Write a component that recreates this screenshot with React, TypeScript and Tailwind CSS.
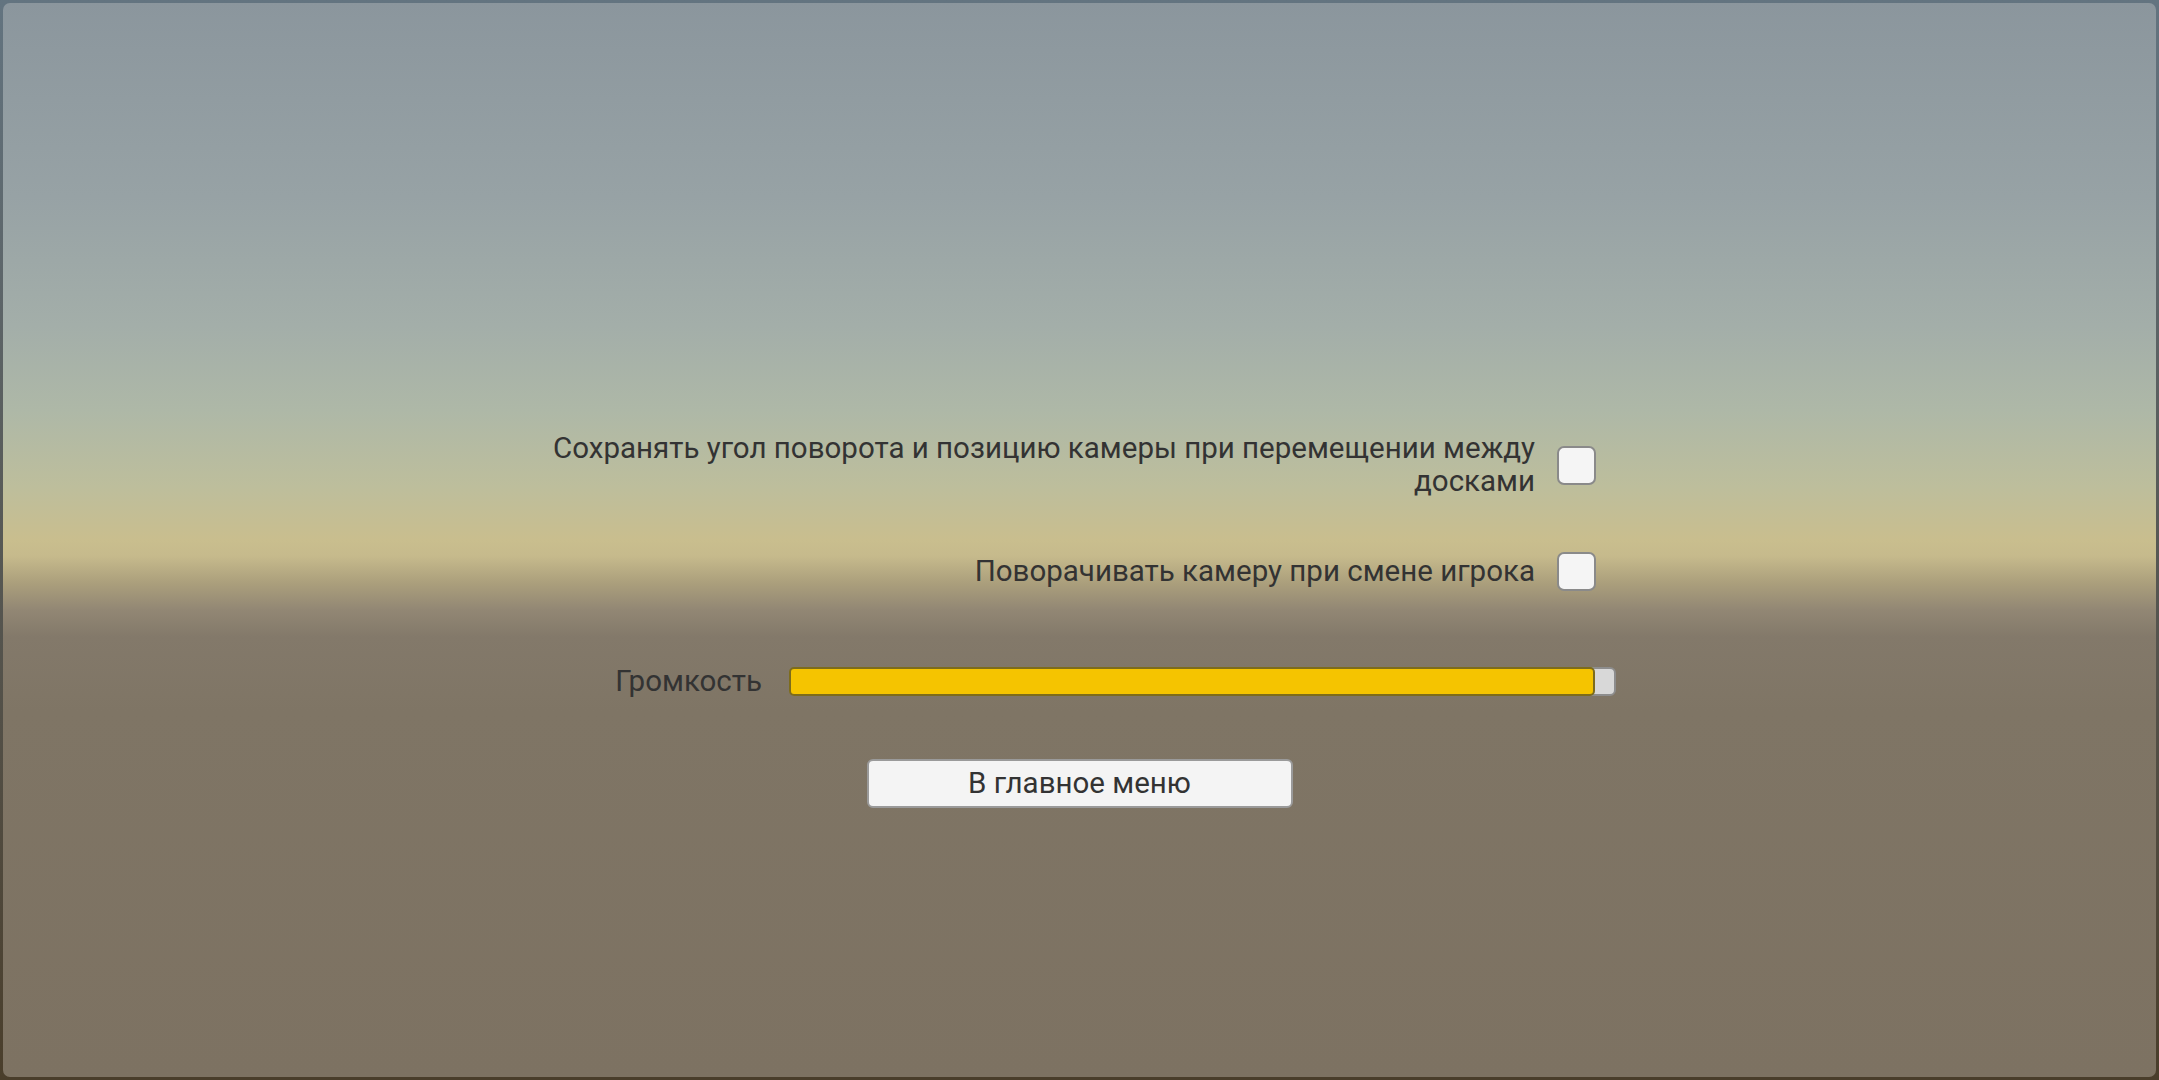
import { useState } from 'react'

const FONT = 'font-["Roboto","Liberation_Sans",sans-serif]'

const Checkbox = ({ checked, onToggle }: { checked: boolean; onToggle: () => void }) => (
  <button
    onClick={onToggle}
    className="w-[39px] h-[39px] shrink-0 rounded-[7px] border-2 border-[#8a8a8a] bg-[#f5f5f5] flex items-center justify-center"
    aria-checked={checked}
    role="checkbox"
  >
    {checked && <span className="w-[19px] h-[19px] rounded-[3px] bg-[#444]" />}
  </button>
)

export default function App() {
  const [keepCamera, setKeepCamera] = useState(false)
  const [rotateCamera, setRotateCamera] = useState(false)
  const volume = 97.9

  return (
    <div className="w-[2159px] h-[1080px] bg-gradient-to-b from-[#637480] to-[#4a3e2b] p-[3px]">
      <div
        className={`relative w-full h-full rounded-[7px] overflow-hidden bg-[linear-gradient(to_bottom,#8b969d_0%,#97a2a5_18%,#a3aea9_30%,#aeb8a7_38%,#bdbe9c_45%,#c9be8e_50%,#c6ba8c_51.5%,#ab9f7c_54%,#928774_56.5%,#83796a_59%,#7f7565_66%,#7d7262_100%)] ${FONT} text-[#333333]`}
      >
        <div className="flex flex-col pt-[429px]">
          {/* камера между досками */}
          <div className="flex items-center justify-end gap-[22px] w-[1593px]">
            <p className="text-right text-[29.5px] leading-[33px]">
              Сохранять угол поворота и позицию камеры при перемещении между
              <br />
              досками
            </p>
            <Checkbox checked={keepCamera} onToggle={() => setKeepCamera(!keepCamera)} />
          </div>

          {/* поворот камеры */}
          <div className="flex items-center justify-end gap-[22px] w-[1593px] mt-[54px]">
            <p className="text-right text-[29.5px] leading-[33px]">Поворачивать камеру при смене игрока</p>
            <Checkbox checked={rotateCamera} onToggle={() => setRotateCamera(!rotateCamera)} />
          </div>

          {/* громкость */}
          <div className="flex items-center justify-end gap-[27px] w-[1613px] mt-[74px]">
            <span className="text-[29.5px] leading-[33px]">Громкость</span>
            <div className="w-[827px] h-[29px] rounded-[6px] border-2 border-[#8d8d8d] bg-[#d8d8d8] flex">
              <div
                className="h-[29px] rounded-[5px] border-2 border-[#7d6c1c] bg-[#f5c400] -m-[2px]"
                style={{ width: `${volume}%` }}
              />
            </div>
          </div>

          {/* кнопка */}
          <div className="flex justify-center mt-[61px]">
            <button className="w-[426px] h-[49px] rounded-[6px] border-2 border-[#9a9a9a] bg-[#f4f4f4] text-[29.5px] leading-[33px] text-[#333333]">
              В главное меню
            </button>
          </div>
        </div>
      </div>
    </div>
  )
}
